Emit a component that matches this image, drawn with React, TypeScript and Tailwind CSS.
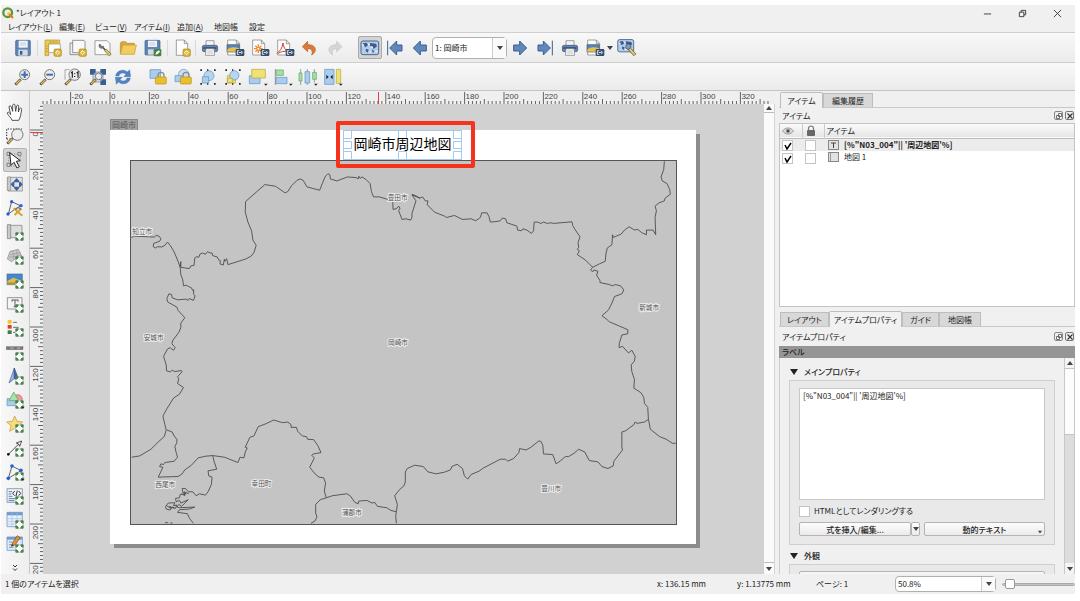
import type { ReactNode } from "react";

/* ---------- shared icon parts, drawn on a 48 unit grid ---------- */

function Icon({ children, size = "h-4 w-4" }: { children: ReactNode; size?: string }) {
  return (
    <svg viewBox="0 0 48 48" className={`${size} shrink-0 overflow-visible`} fill="none" aria-hidden="true">
      {children}
    </svg>
  );
}

const Plus = () => (
  <g>
    <rect x="25" y="25" width="25" height="25" rx="3" fill="#4a8350" />
    <path d="M37.500 25v25M25 37.500h25" stroke="#e4efe4" strokeWidth="6" />
    <path d="M37.500 30v15M30 37.500h15" stroke="#fff" strokeWidth="9" />
  </g>
);
const NewBadge = () => (
  <g>
    <rect x="27" y="27" width="22" height="22" rx="4" fill="#d9b12c" stroke="#a98a1e" strokeWidth="2" />
    <path d="M38 30v16M30 38h16M33 33l10 10M43 33l-10 10" stroke="#fff" strokeWidth="2.500" />
    <circle cx="38" cy="38" r="3" fill="#d9b12c" />
  </g>
);
const ExportBadge = () => (
  <g>
    <rect x="26" y="27" width="26" height="21" rx="4" fill="#2f4a6b" />
    <path d="M37 32h-6v11h6M35 37.500h9M42 32l5 5.500-5 5.500" stroke="#fff" strokeWidth="2.500" />
  </g>
);
const Page = () => <path d="M7 0h24l10 11v35H7zM31 0v11h10" fill="#fdfdfd" stroke="#777" strokeWidth="2" />;
const Lens = ({ cx = 29, cy = 17, r = 15 }: { cx?: number; cy?: number; r?: number }) => (
  <g>
    <path d="M17 31L1 47" stroke="#3a3a3a" strokeWidth="8" />
    <path d="M16 32L3 45" stroke="#eac04a" strokeWidth="4.500" />
    <circle cx={cx} cy={cy} r={r} fill="#ececec" stroke="#777" strokeWidth="3" />
  </g>
);
const Lock = () => (
  <g>
    <path d="M24 26v-7a9 9 0 0118 0v7" stroke="#8a8a8a" strokeWidth="4" />
    <rect x="16" y="24" width="33" height="21" rx="3" fill="#e9bf2e" stroke="#b99216" strokeWidth="2" />
  </g>
);
const Corners = () => (
  <g fill="#222">
    <path d="M1 1h5v5H1zM42 1h5v5h-5zM1 42h5v5H1zM42 42h5v5h-5zM21 1h4v4h-4zM21 43h4v4h-4z" />
  </g>
);
const MenuDot = () => <path d="M42 44h11l-5.500 6z" fill="#222" />;
const Globe = () => (
  <g>
    <rect x="-3" y="3" width="53" height="41" rx="6" fill="#b3cdea" stroke="#4b658c" strokeWidth="3" />
    <path d="M2 10l12-2 4 8-8 6zM24 9l18 2 3 8-10 8-4-8-8-2zM12 26l8 3-3 9-6-5zM30 28l7 6-5 5z" fill="#3d5c8c" />
    <path d="M0 15h6M40 34h6M22 36h5M18 14h6M28 22h5" stroke="#fff" strokeWidth="3" />
  </g>
);

const icons = {
  save: (
    <>
      <rect x="2" y="1" width="44" height="46" rx="3" fill="#5f86b7" stroke="#395a88" strokeWidth="2" />
      <rect x="11" y="2" width="27" height="21" fill="#f1f4f8" />
      <path d="M15 9h18M15 15h18" stroke="#aebccc" strokeWidth="2" />
      <rect x="10" y="29" width="28" height="18" fill="#d4dae1" />
      <rect x="15" y="33" width="7" height="11" fill="#395a88" />
    </>
  ),
  newLayout: (
    <>
      <path d="M10 12h36v26H10z" fill="#fff" stroke="#888" strokeWidth="2" />
      <path d="M0 0h44v10H11v37H0z" fill="#edc94f" stroke="#b4922b" strokeWidth="2" />
      <path d="M17 3v4M25 3v4M33 3v4M3 18h4M3 26h4M3 34h4" stroke="#8c6f16" strokeWidth="2" />
      <NewBadge />
    </>
  ),
  duplicate: (
    <>
      <path d="M0 9h31v35H0z" fill="#eee" stroke="#666" strokeWidth="2" />
      <path d="M8 1h34l3 4v33H8z" fill="#f9f9fb" stroke="#666" strokeWidth="2" />
      <NewBadge />
    </>
  ),
  manager: (
    <>
      <path d="M0 2h36l9 9v33H0z" fill="#fbfbfb" stroke="#777" strokeWidth="2" />
      <path d="M15 12a7 7 0 1011 7l-5 1-4-4z" fill="#7b8794" stroke="#444" strokeWidth="2" />
      <path d="M24 23l7 7" stroke="#555" strokeWidth="5" />
      <path d="M31 29l15 17" stroke="#555" strokeWidth="9" />
      <path d="M32 30l13 15" stroke="#edc94f" strokeWidth="6" />
    </>
  ),
  folder: (
    <>
      <path d="M1 42V9l4-4h12l4 5h22v8" fill="#d8a93a" stroke="#b3862a" strokeWidth="2" />
      <path d="M1 43L8 15h41l-6 28z" fill="#f3cc60" stroke="#c39a32" strokeWidth="2" />
    </>
  ),
  saveTemplate: (
    <>
      <rect x="0" y="1" width="45" height="44" rx="3" fill="#5f86b7" stroke="#395a88" strokeWidth="2" />
      <rect x="9" y="2" width="27" height="19" fill="#f1f4f8" />
      <path d="M13 9h18M13 15h18" stroke="#aebccc" strokeWidth="2" />
      <rect x="9" y="28" width="20" height="16" fill="#d4dae1" />
      <rect x="26" y="27" width="23" height="22" rx="4" fill="#48834d" />
      <path d="M31 44l3-8 8-5 3 4-7 7z" fill="#fff" />
    </>
  ),
  addPage: (
    <>
      <Page />
      <NewBadge />
    </>
  ),
  print: (
    <>
      <path d="M12 2h24v16H12z" fill="#f4f4f4" stroke="#777" strokeWidth="2" />
      <rect x="1" y="16" width="46" height="19" rx="5" fill="#6388b5" stroke="#3a5275" strokeWidth="2" />
      <path d="M4 24h40" stroke="#2d4262" strokeWidth="4" />
      <path d="M12 26h24l2 20H10z" fill="#fafafa" stroke="#777" strokeWidth="2" />
      <path d="M16 33h16M15 39h18" stroke="#aaa" strokeWidth="2" />
    </>
  ),
  exportImage: (
    <>
      <path d="M2 0h26l10 11v34H2zM28 0v11h10" fill="#fdfdfd" stroke="#777" strokeWidth="2" />
      <path d="M0 14h37v22H0z" fill="#4f86c6" stroke="#555" strokeWidth="2" />
      <path d="M1 29c8-8 20-9 35-4v10H1z" fill="#e6c14a" />
      <ExportBadge />
    </>
  ),
  exportSvg: (
    <>
      <path d="M2 0h26l10 11v34H2zM28 0v11h10" fill="#fdfdfd" stroke="#777" strokeWidth="2" />
      <path d="M19 13v26M6 26h26M10 17l18 18M28 17L10 35" stroke="#ef8a2b" strokeWidth="4" />
      <circle cx="19" cy="26" r="3" fill="#fff" />
      <ExportBadge />
    </>
  ),
  exportPdf: (
    <>
      <path d="M2 0h26l10 11v34H2zM28 0v11h10" fill="#fdfdfd" stroke="#777" strokeWidth="2" />
      <path d="M-1 40c9-5 17-15 19-31 1 12 6 21 16 25-13-1-23 1-30 6" stroke="#cf4034" strokeWidth="3" />
      <ExportBadge />
    </>
  ),
  undo: (
    <path
      d="M17 4L1 20l16 15v-9c10-1 17 5 12 19 16-9 17-31-12-31z"
      fill="#d9793a"
      stroke="#b75c22"
      strokeWidth="2"
    />
  ),
  redo: (
    <path
      d="M29 4l16 16-16 15v-9c-10-1-17 5-12 19C1 36 0 14 29 14z"
      fill="#d6d6d6"
      stroke="#c2c2c2"
      strokeWidth="2"
    />
  ),
  globe: <Globe />,
  first: (
    <path d="M2 2v44M45 15v18H29v12L8 24 29 3v12z" fill="#5f88bd" stroke="#3c5f92" strokeWidth="3" />
  ),
  prev: <path d="M43 15v18H25v12L4 24 25 3v12z" fill="#5f88bd" stroke="#3c5f92" strokeWidth="3" />,
  next: <path d="M5 15v18h18v12l21-21L23 3v12z" fill="#5f88bd" stroke="#3c5f92" strokeWidth="3" />,
  last: (
    <path d="M46 2v44M3 15v18h16v12l21-21L19 3v12z" fill="#5f88bd" stroke="#3c5f92" strokeWidth="3" />
  ),
  atlasSettings: (
    <>
      <g transform="translate(-1 -4) scale(.9)">
        <Globe />
      </g>
      <circle cx="28" cy="20" r="8" fill="#7f9cc4" stroke="#444" strokeWidth="2" />
      <path d="M31 26l17 19" stroke="#555" strokeWidth="10" />
      <path d="M32 27l15 17" stroke="#edd05f" strokeWidth="6" />
    </>
  ),
  zoomIn: (
    <>
      <Lens />
      <path d="M29 7v20M19 17h20" stroke="#3f6fae" strokeWidth="6" />
    </>
  ),
  zoomOut: (
    <>
      <Lens />
      <path d="M19 17h20" stroke="#3f6fae" strokeWidth="6" />
    </>
  ),
  zoomActual: (
    <>
      <path d="M0 32V2h14" stroke="#888" strokeWidth="2" />
      <Lens r={17} />
      <path d="M18 12l4-3v17M35 12l4-3v17M29 13v3M29 21v3" stroke="#222" strokeWidth="3.500" />
    </>
  ),
  zoomFull: (
    <>
      <path d="M9 9h30v30H9z" fill="#dcdcdc" stroke="#777" strokeWidth="2" />
      <Lens cx={26} cy={22} r={10} />
      <path d="M0 0h17v17H0zM31 0h17v17H31zM31 31h17v17H31z" fill="#39608f" />
      <path d="M17 9v8H9zM31 9v8h8zM31 39v-8h8z" fill="#8fb0d8" />
    </>
  ),
  refresh: (
    <>
      <path d="M2 21C4 4 26-2 37 9l7-7 3 21H26l7-7C25 9 14 12 12 21z" fill="#4f83c4" stroke="#3768a6" />
      <path d="M46 27C44 44 22 50 11 39l-7 7-3-21h21l-7 7c8 7 19 4 21-5z" fill="#4f83c4" stroke="#3768a6" />
    </>
  ),
  lock: (
    <>
      <path d="M0 2h32v26H0z" fill="#a9cdee" stroke="#5b8fc0" strokeWidth="2" />
      <Lock />
    </>
  ),
  unlock: (
    <>
      <circle cx="26" cy="17" r="16" fill="#c9def2" stroke="#6d95bd" strokeWidth="2" />
      <path d="M0 20h20v18H0z" fill="#a9cdee" stroke="#5b8fc0" strokeWidth="2" />
      <Lock />
    </>
  ),
  group: (
    <>
      <circle cx="27" cy="20" r="15" fill="#b8d5ef" stroke="#5f8fbe" strokeWidth="2" />
      <path d="M7 23h19v19H7z" fill="#a9cdee" stroke="#5b8fc0" strokeWidth="2" />
      <Corners />
    </>
  ),
  ungroup: (
    <>
      <path d="M7 20h24v22H7z" fill="#f1e26b" stroke="#b1a23a" strokeWidth="2" />
      <circle cx="28" cy="19" r="14" fill="#b8d5ef" stroke="#5f8fbe" strokeWidth="2" />
      <path d="M8 28h14v13H8z" fill="#f1e26b" stroke="#b1a23a" strokeWidth="2" />
      <Corners />
    </>
  ),
  raise: (
    <>
      <path d="M-2 20h32v24H-2z" fill="#a9cdee" stroke="#5b8fc0" strokeWidth="2" />
      <path d="M5 1h41v26H5z" fill="#efe274" stroke="#b3a440" strokeWidth="2" />
      <MenuDot />
    </>
  ),
  align: (
    <>
      <path d="M1 0v48" stroke="#666" strokeWidth="2" />
      <path d="M3 3h22v16H3z" fill="#a8e0a6" stroke="#5aa35b" strokeWidth="2" />
      <path d="M3 25h33v19H3z" fill="#a9cdee" stroke="#5b8fc0" strokeWidth="2" />
      <MenuDot />
    </>
  ),
  distribute: (
    <>
      <path d="M2 0v48M22 0v48M43 0v40" stroke="#777" strokeWidth="2" />
      <path d="M-3 12h9v24h-9zM38 10h11v21H38z" fill="#a8e0a6" stroke="#5aa35b" strokeWidth="2" />
      <path d="M15 8h14v34H15z" fill="#a9cdee" stroke="#5b8fc0" strokeWidth="2" />
      <MenuDot />
    </>
  ),
  resize: (
    <>
      <path d="M-1 1h28v45H-1z" fill="#a9cdee" stroke="#5b8fc0" strokeWidth="2" />
      <path d="M34 1h13v42H34z" fill="#efe274" stroke="#b3a440" strokeWidth="2" />
      <path d="M4 17v14l7-7zM23 17v14l-7-7z" fill="#222" />
      <MenuDot />
    </>
  ),
  pan: (
    <path
      d="M15 49c-2-9-14-15-14-23 4-4 8 2 10 6L6 9c0-5 6-5 7 0l4 13 0-18c1-5 7-5 7 0l2 18 3-16c1-4 7-3 6 1l-1 17 4-10c2-4 7-2 6 2-2 12-3 24-9 33z"
      fill="#fff"
      stroke="#333"
      strokeWidth="2.500"
    />
  ),
  zoomTool: (
    <>
      <path d="M-1 32V3h46" stroke="#222" strokeWidth="3" strokeDasharray="4 4" />
      <path d="M-1 33h18" stroke="#222" strokeWidth="3" strokeDasharray="4 4" />
      <Lens cx={31} cy={20} r={17} />
    </>
  ),
  select: (
    <>
      <path d="M5 8v34h30M5 6h34v20" stroke="#777" strokeWidth="2" strokeDasharray="4 4" />
      <path d="M0 1h9v9H0zM33 1h9v9H33zM0 34h9v9H0z" fill="#ddd" stroke="#555" strokeWidth="2" />
      <path d="M8 2l4 38 9-9 9 17 7-4-9-16 12-2z" fill="#fff" stroke="#222" strokeWidth="3" />
    </>
  ),
  moveContent: (
    <>
      <path d="M3 4h43v41H3z" fill="#e2e2e2" stroke="#777" strokeWidth="2" />
      <path d="M1 3h10v40H1z" fill="#c9c9c9" stroke="#888" strokeWidth="2" />
      <path d="M29 6l8 9v4H21v-4zM29 45l8-9v-4H21v4zM11 25l7-8h4v16h-4zM47 25l-7-8h-4v16h4z" fill="#38639e" />
    </>
  ),
  editNodes: (
    <>
      <path d="M14 5L4 42l22-16 16-8z" fill="#f3f3f3" stroke="#444" strokeWidth="2.500" />
      <path d="M20 25l26 22M23 45l20-20" stroke="#d5a32e" strokeWidth="6" />
      <path d="M25 29l9-7 9 7" stroke="#777" strokeWidth="4" />
      <circle cx="14" cy="5" r="5" fill="#2461dd" />
      <circle cx="42" cy="17" r="5" fill="#2461dd" />
      <circle cx="3" cy="42" r="5" fill="#2461dd" />
    </>
  ),
  addMap: (
    <>
      <path d="M4 4h41v37H4z" fill="#dedede" stroke="#777" strokeWidth="2" />
      <path d="M1 2h10v42H1z" fill="#c9c9c9" stroke="#777" strokeWidth="2" />
      <Plus />
    </>
  ),
  add3d: (
    <>
      <path d="M1 33L9 10l25-6 12 24-22 5-10 8z" fill="#c9c9c9" stroke="#888" strokeWidth="2" />
      <path d="M9 20l32-6M6 28l37-6M18 9l2 26M28 7l6 24" stroke="#999" strokeWidth="2" />
      <Plus />
    </>
  ),
  addPicture: (
    <>
      <path d="M0 6h46v32H0z" fill="#4488d2" stroke="#4a6b8f" strokeWidth="2" />
      <path d="M1 27l18-10 26 10v10H1z" fill="#e2bd4c" />
      <path d="M1 31h44v6H1z" fill="#b79430" />
      <Plus />
    </>
  ),
  addLabel: (
    <>
      <path d="M1 5h44v34H1z" fill="#f4f4f4" stroke="#666" strokeWidth="2" />
      <path d="M15 12h18M24 12v20M20 32h8M15 11v6M33 11v6" stroke="#444" strokeWidth="2.500" />
      <Plus />
    </>
  ),
  addLegend: (
    <>
      <rect x="2" y="0" width="12" height="11" fill="#f2c230" />
      <rect x="2" y="15" width="12" height="11" fill="#d8402c" />
      <rect x="2" y="31" width="12" height="11" fill="#3e7e4a" />
      <path d="M18 7h12M18 22h17M18 37h8" stroke="#555" strokeWidth="2.500" />
      <Plus />
    </>
  ),
  addScale: (
    <>
      <rect x="-2" y="8" width="50" height="9" fill="#777" stroke="#555" />
      <path d="M10 12.500h10M30 12.500h10" stroke="#bbb" strokeWidth="3" />
      <Plus />
    </>
  ),
  addNorth: (
    <>
      <path d="M22 0L6 45l16-13z" fill="#9dbbe2" stroke="#3f5f93" strokeWidth="2" />
      <path d="M22 0l15 40-15-8z" fill="#3f68a8" stroke="#34527f" strokeWidth="2" />
      <Plus />
    </>
  ),
  addShape: (
    <>
      <circle cx="32" cy="22" r="14" fill="#ee9d98" stroke="#bf605c" strokeWidth="2" />
      <path d="M0 20h25v21H0z" fill="#a9cdee" stroke="#5b8fc0" strokeWidth="2" />
      <path d="M20 0L6 26h29z" fill="#a8e3ab" stroke="#4fa256" strokeWidth="2" />
      <Plus />
      <MenuDot />
    </>
  ),
  addMarker: (
    <>
      <path d="M23 0l7 16 17 2-13 11 4 17-15-9-15 9 4-17L-1 18l17-2z" fill="#f5dc7c" stroke="#bf9433" strokeWidth="2" />
      <Plus />
    </>
  ),
  addArrow: (
    <>
      <path d="M4 43L36 11" stroke="#333" strokeWidth="2.500" />
      <path d="M28 9l16-6-6 16-3-7z" fill="#fff" stroke="#333" strokeWidth="2.500" />
      <circle cx="4" cy="43" r="4" fill="#111" />
      <Plus />
    </>
  ),
  addNode: (
    <>
      <path d="M15 6L4 43l38-23z" fill="#f3f3f3" stroke="#444" strokeWidth="2.500" />
      <circle cx="15" cy="6" r="5.500" fill="#2461dd" />
      <circle cx="42" cy="19" r="5.500" fill="#2461dd" />
      <circle cx="4" cy="43" r="5.500" fill="#2461dd" />
      <Plus />
      <MenuDot />
    </>
  ),
  addHtml: (
    <>
      <path d="M0 2h46v41H0z" fill="#eef1f5" stroke="#667a94" strokeWidth="2" />
      <path d="M5 11h10M5 18h8M5 25h11M5 32h20M5 38h17" stroke="#5a7fb8" strokeWidth="3" />
      <path d="M23 9l-6 7 6 7M35 9l6 7-6 7M31 8l-4 16" stroke="#333" strokeWidth="3" />
      <Plus />
    </>
  ),
  addFixedTable: (
    <>
      <path d="M0 1h46v43H0z" fill="#e9f1fa" stroke="#5b83b5" strokeWidth="2" />
      <path d="M0 1h46v9H0z" fill="#6f9bd0" />
      <path d="M15 3v40M30 3v40M1 20h44M1 28h44M1 36h44" stroke="#a3c1e4" strokeWidth="2" />
      <Plus />
    </>
  ),
  addTable: (
    <>
      <path d="M0 3h46v40H0z" fill="#dfeaf7" stroke="#5b83b5" strokeWidth="2" />
      <path d="M0 3h46v8H0z" fill="#6f9bd0" />
      <path d="M6 18h10M6 26h8M6 34h14" stroke="#6f9bd0" strokeWidth="3" />
      <path d="M13 31l4-11L31-1l8 6-14 21z" fill="#df9337" stroke="#6e4719" strokeWidth="2" />
      <path d="M13 31l2-6 5 3z" fill="#222" />
      <Plus />
    </>
  ),
};
type IconName = keyof typeof icons;

/* ---------- small controls ---------- */

function ToolButton({ name, label, width = "w-[25px]" }: { name: IconName; label: string; width?: string }) {
  return (
    <button type="button" aria-label={label} className={`flex h-6 ${width} shrink-0 items-center justify-center`}>
      <Icon>{icons[name]}</Icon>
    </button>
  );
}

function Grip({ width }: { width: string }) {
  return (
    <span className={`flex ${width} shrink-0 justify-center`}>
      <span className="h-4 w-1 bg-[radial-gradient(#c4c4c4_35%,transparent_40%)] bg-[size:2px_2px]" />
    </span>
  );
}

function Separator({ width }: { width: string }) {
  return (
    <span className={`flex ${width} shrink-0 justify-center`}>
      <span className="h-4 w-px bg-[#d9d9d9]" />
    </span>
  );
}

const Down = ({ className = "" }: { className?: string }) => (
  <svg viewBox="0 0 6 4" className={`h-1 w-1.5 shrink-0 ${className}`} aria-hidden="true">
    <path d="M0 0h6L3 4z" fill="#444" />
  </svg>
);
const Up = () => (
  <svg viewBox="0 0 6 4" className="h-1 w-1.5 shrink-0" aria-hidden="true">
    <path d="M0 4h6L3 0z" fill="#444" />
  </svg>
);

function Combo({ label, value, className }: { label: string; value: string; className: string }) {
  return (
    <span className={`relative flex shrink-0 ${className}`}>
      <select
        aria-label={label}
        className="w-full appearance-none rounded-sm border border-[#b0b0b0] bg-white pl-[2px] text-[8px] leading-none"
      >
        <option>{value}</option>
      </select>
      <span className="pointer-events-none absolute inset-y-px right-px flex w-[14px] items-center justify-center border-l border-[#ccc] bg-[#fafafa]">
        <Down />
      </span>
    </span>
  );
}

function Check({ label, checked = false }: { label: string; checked?: boolean }) {
  return (
    <span className="relative flex h-[11px] w-[11px] shrink-0">
      <input
        type="checkbox"
        aria-label={label}
        defaultChecked={checked}
        className="peer h-full w-full appearance-none border border-[#c4c4c4] bg-white"
      />
      <svg viewBox="0 0 11 11" className="pointer-events-none absolute inset-0 hidden peer-checked:block" aria-hidden="true">
        <path d="M3 5l2 4 4-6" fill="none" stroke="#000" strokeWidth="1.500" />
      </svg>
    </span>
  );
}

function DockButtons() {
  return (
    <span className="ml-auto flex gap-[2px]">
      <button type="button" aria-label="フロート" className="flex h-[9px] w-[9px] items-center justify-center rounded-xs border border-[#888]">
        <svg viewBox="0 0 6 6" className="h-1.5 w-1.5" fill="none" stroke="#555">
          <path d="M2.500 .5h3v3h-3zM.5 2.500h3v3h-3z" strokeWidth=".8" />
        </svg>
      </button>
      <button type="button" aria-label="閉じる" className="flex h-[9px] w-[9px] items-center justify-center rounded-xs border border-[#777]">
        <svg viewBox="0 0 6 6" className="h-1.5 w-1.5" fill="none" stroke="#333">
          <path d="M.5 .5l5 5M5.500 .5l-5 5" strokeWidth="1.100" />
        </svg>
      </button>
    </span>
  );
}

function Tabs({ items, active }: { items: { name: string; width: string }[]; active: string }) {
  return (
    <div role="tablist" className="flex h-4 shrink-0 items-end border-b border-[#c8c8c8] pl-px">
      {items.map((t) => (
        <button
          key={t.name}
          type="button"
          role="tab"
          aria-selected={t.name === active}
          className={`${t.width} shrink-0 border border-b-0 border-[#bdbdbd] whitespace-nowrap ${
            t.name === active ? "-mb-px h-4 rounded-t-xs bg-[#f1f1f1]" : "h-[14px] bg-[#d8d8d8]"
          }`}
        >
          {t.name}
        </button>
      ))}
    </div>
  );
}

/* ---------- rulers ---------- */

const UNIT = 1.97;
const range = (from: number, to: number, step: number) =>
  Array.from({ length: Math.floor((to - from) / step) + 1 }, (_, i) => from + i * step);

function HorizontalRuler() {
  const origin = 80;
  return (
    <svg className="h-[13px] w-full shrink-0 bg-[#efefef] font-['Liberation_Sans',sans-serif]" aria-hidden="true">
      {range(-34, 334, 2).map((v) => {
        const x = origin + v * UNIT;
        const top = v % 20 === 0 ? 1 : v % 10 === 0 ? 8 : 10;
        return <path key={v} d={`M${x} ${top}V13`} stroke="#555" strokeWidth=".9" />;
      })}
      {range(-20, 320, 20).map((v) => (
        <text key={v} x={origin + v * UNIT + 1} y="8" fontSize="8" fill="#444">
          {v}
        </text>
      ))}
      <path d="M348.500 1V13" stroke="#e04040" />
    </svg>
  );
}

function VerticalRuler() {
  const origin = 26;
  return (
    <svg className="h-full w-[13px] shrink-0 bg-[#efefef] font-['Liberation_Sans',sans-serif]" aria-hidden="true">
      {range(-12, 226, 2).map((v) => {
        const y = origin + v * UNIT;
        const left = v % 20 === 0 ? 0 : v % 10 === 0 ? 8 : 10;
        return <path key={v} d={`M${left} ${y}H13`} stroke="#555" strokeWidth=".9" />;
      })}
      {range(0, 220, 20).map((v) => (
        <text
          key={v}
          x="0"
          y="0"
          transform={`translate(8 ${origin + v * UNIT + 2}) rotate(-90)`}
          textAnchor="end"
          fontSize="8"
          fill="#444"
        >
          {v}
        </text>
      ))}
      <path d="M0 28.500H13" stroke="#e04040" />
    </svg>
  );
}

/* ---------- map ---------- */

const places = [
  { name: "豊田市", x: 833, y: 140 },
  { name: "知立市", x: 64, y: 244 },
  { name: "安城市", x: 98, y: 563 },
  { name: "岡崎市", x: 834, y: 578 },
  { name: "新城市", x: 1590, y: 471 },
  { name: "西尾市", x: 133, y: 1005 },
  { name: "幸田町", x: 423, y: 1002 },
  { name: "蒲郡市", x: 695, y: 1090 },
  { name: "豊川市", x: 1295, y: 1018 },
];

const borderTiles = [
  {
    offset: "translate(0 0)",
    lines: [
      "M32 262L36 256 100 259 106 254 114 256 120 264 116 272 98 278 97 288 104 292 110 288 122 289 132 284 140 274 148 284 160 304 170 328 178 350 180 333 180 350 192 352 206 354 210 346 220 344 222 322 226 318 234 320 238 310 246 307 254 311 260 303 268 307 274 307 276 315 290 319 294 328 299 330 298 340 308 343 311 326 313 332 318 324 322 342 376 325 392 316 400 306 407 284 397 268 393 240 382 214 374 184 375 152 433 101 465 106 494 126 502 122 514 104 530 88 540 84 548 88 560 108 598 118 606 98 614 78 623 68 629 72 630 84 650 90 682 78 708 80 714 84 716 76 720 82 726 78 738 86 750 98 754 122 760 138 778 138 804 146 818 148 819 176 830 173 836 166 840 172 836 180 846 206 858 204 872 208 876 200 876 188 888 150 876 132 900 142",
      "M178 350L180 372 186 388 188 406 196 404 204 408 212 412 216 420 219 418 218 430 223 436 218 450 206 444 202 450 196 446 170 448 154 442 152 432 144 430 138 444 140 454 168 470 172 480 192 502 180 518 180 532 174 546 156 570",
    ],
  },
  {
    offset: "translate(0 570)",
    lines: [
      "M156 0L153 10 163 22 158 30 148 22 140 26 128 48 136 74 137 92 148 95 154 90 162 94 182 91 184 94 170 110 174 116 170 130 188 142 176 162 158 174 138 206 126 228 136 270 130 290 112 306 90 328 56 348 32 352",
      "M138 270L154 276 160 288 168 298 168 308 162 320 166 338 170 352 160 364 132 368 128 374 120 372 116 380 126 382 112 412 172 410 184 402 192 390 212 376 232 354 254 349 276 347 312 352 352 368 358 352 370 354 374 336 380 324 374 322 388 292 400 288 413 260 434 252 460 240 486 248 502 246 512 254 512 262 528 262 532 274 546 288 558 290 562 298 580 299 592 316 602 338 580 342 574 346 582 354 568 382 584 402 596 412 610 414 616 430 612 454 618 474 636 468 680 462 690 468 704 488 714 492 716 484 740 482 756 490 764 488 772 500 800 504 812 512 828 516",
      "M618 474L600 480 586 494 586 520 590 532 584 544 572 551",
      "M829 551L827 530 832 494 824 468 838 450",
      "M276 347L280 364 288 388 262 393 264 408 274 412 272 434 262 456 254 466 236 462 226 468 216 456 202 456 194 446 184 446 186 458 196 462 178 464 176 474 164 476 166 486 176 482 180 490 202 480 182 500 174 494 168 502 176 504 222 502 206 508 176 510 170 518 200 522 206 536 218 551",
      "M134 500L142 490 162 489 158 498 168 496 164 506 154 502 148 511 136 508zM136 497L150 506 146 500 160 506M182 462L192 468 190 456 204 462M132 549L142 549M148 550L155 550",
    ],
  },
  {
    offset: "translate(840 0)",
    lines: [
      "M36 130L50 136 60 142 68 138 76 150 84 150 82 162 104 184 134 196 140 200 164 194 188 206 214 204 228 210 242 200 246 186 262 186 268 198 272 214 292 212 302 210 308 202 318 204 322 216 352 226 354 238 366 240 370 234 382 238 396 248 402 240 404 214 414 214 424 218 432 214 444 218 454 216 462 218 518 213 520 224 528 238 542 258 536 276 538 290 534 296 540 300 534 312 558 328 580 350 574 358 580 364 584 358 596 362 592 374 602 390 602 396 630 402 640 406 648 402 664 406 674 418 668 430 646 438 638 458 628 478 608 496 622 506 630 514 686 538 686 550 668 554 660 580 660 592",
      "M796 31L794 56 786 78 790 90 804 98 812 116 814 130 798 142 796 150 780 156 768 166 772 180 768 200 770 252 762 238 742 238 742 252 728 246 716 236 706 238 690 228 676 238 666 250 642 260 640 252 638 282 624 292 620 310 618 332 600 340 580 350",
    ],
  },
  {
    offset: "translate(840 570)",
    lines: [
      "M660 22L670 18 688 38 698 30 708 48 706 62 696 74 698 94 706 118 704 144 726 158 734 172 736 190 746 202 748 238 754 268 782 290 802 298 820 310 830 310",
      "M748 238L736 246 714 250 708 246 704 254 680 272 668 276 668 322 670 330 644 364 642 378 626 386 608 380 596 366 570 362 556 336 538 328 524 340 508 350 498 350 484 362 470 372 460 344 432 342 430 316 424 304 418 303 394 322 380 330 360 326 358 338 342 356 324 364 318 358 302 358 252 384 238 394 214 404 204 418 194 408 188 386 172 373 156 380 152 390 134 397 108 402 84 396 70 380 44 376 22 386 16 396 16 426 12 438 -2 450",
    ],
  },
];

function RegionMap() {
  return (
    <svg viewBox="30 30 1641 1092" className="absolute left-5 top-[30px] w-[547px] border border-[#555] bg-[#c4c4c4]">
      {borderTiles.map((tile) => (
        <g key={tile.offset} transform={tile.offset} fill="none" stroke="#4c4c4c" strokeWidth="2.700" strokeLinejoin="round">
          {tile.lines.map((d) => (
            <path key={d} d={d} />
          ))}
        </g>
      ))}
      {places.map((p) => (
        <text
          key={p.name}
          x={p.x}
          y={p.y + 7}
          textAnchor="middle"
          fontSize="20"
          fill="#555"
          stroke="#ececec"
          strokeWidth="6"
          paintOrder="stroke"
          strokeLinejoin="round"
        >
          {p.name}
        </text>
      ))}
    </svg>
  );
}

function Canvas() {
  return (
    <div className="relative min-w-0 flex-1 overflow-hidden bg-[#d1d1d1]">
      <span className="absolute left-[67px] top-[15px] h-3 w-7 border border-[#888] bg-[#a3a3a3] text-center text-[8px] leading-[10px] text-[#555]">
        岡崎市
      </span>
      <div className="absolute left-[67px] top-[26px] h-[414px] w-[586px] bg-white shadow-[4px_4px_0_#8c8c8c]">
        <RegionMap />
        <div className="absolute left-[233px] top-0 flex h-[30px] w-[119px] justify-center pt-[5px]">
          <svg viewBox="0 0 119 30" className="absolute inset-0 h-full w-full" fill="none" stroke="#a5c9ee">
            <path d="M.5 .5h118v29h-118zM.5 .5h8v8h-8zM55.500 .5h8v8h-8zM110.500 .5h8v8h-8zM.5 11.500h8v7h-8zM110.500 11.500h8v7h-8zM.5 21.500h8v8h-8zM55.500 21.500h8v8h-8zM110.500 21.500h8v8h-8z" />
          </svg>
          <span className="relative text-[14px] leading-4 text-black">岡崎市周辺地図</span>
        </div>
        <div className="absolute -top-[9px] left-[226px] h-[47px] w-[139px] rounded-xs border-4 border-[#f5331c]" />
      </div>
    </div>
  );
}

/* ---------- data ---------- */

const menus = [
  { name: "レイアウト", key: "L", width: "w-[51px]" },
  { name: "編集", key: "E", width: "w-9" },
  { name: "ビュー", key: "V", width: "w-[39px]" },
  { name: "アイテム", key: "I", width: "w-[43px]" },
  { name: "追加", key: "A", width: "w-[37px]" },
  { name: "地図帳", key: "", width: "w-[35px]" },
  { name: "設定", key: "", width: "w-8" },
];

type Tool = [IconName, string];
const layoutTools: Tool[] = [
  ["newLayout", "新規レイアウト"],
  ["duplicate", "レイアウトを複製"],
  ["manager", "レイアウトマネージャ"],
  ["folder", "テンプレートから追加"],
  ["saveTemplate", "テンプレートとして保存"],
];
const exportTools: Tool[] = [
  ["print", "印刷"],
  ["exportImage", "画像としてエクスポート"],
  ["exportSvg", "SVGとしてエクスポート"],
  ["exportPdf", "PDFとしてエクスポート"],
  ["undo", "元に戻す"],
  ["redo", "やり直し"],
];
const zoomTools: Tool[] = [
  ["zoomIn", "拡大"],
  ["zoomOut", "縮小"],
  ["zoomActual", "100%"],
  ["zoomFull", "全域表示"],
  ["refresh", "更新"],
];
const actionTools: Tool[] = [
  ["lock", "ロック"],
  ["unlock", "ロック解除"],
  ["group", "グループ化"],
  ["ungroup", "グループ解除"],
  ["raise", "前面へ"],
  ["align", "整列"],
  ["distribute", "分布"],
  ["resize", "リサイズ"],
];
const sideTools: Tool[] = [
  ["pan", "パン"],
  ["zoomTool", "ズーム"],
  ["select", "選択"],
  ["moveContent", "コンテンツを移動"],
  ["editNodes", "ノードを編集"],
  ["addMap", "地図を追加"],
  ["add3d", "3D地図を追加"],
  ["addPicture", "画像を追加"],
  ["addLabel", "ラベルを追加"],
  ["addLegend", "凡例を追加"],
  ["addScale", "スケールバーを追加"],
  ["addNorth", "方位記号を追加"],
  ["addShape", "図形を追加"],
  ["addMarker", "マーカーを追加"],
  ["addArrow", "矢印を追加"],
  ["addNode", "ノードアイテムを追加"],
  ["addHtml", "HTMLを追加"],
  ["addFixedTable", "固定テーブルを追加"],
  ["addTable", "属性テーブルを追加"],
];

const layerRows = [
  { name: "[%\"N03_004\"|| '周辺地図'%]", label: true },
  { name: "地図 1", label: false },
];

/* ---------- regions ---------- */

function TitleBar() {
  return (
    <header className="flex h-4 shrink-0 items-center pl-px">
      <svg viewBox="0 0 36 36" className="h-3 w-3" fill="none" aria-hidden="true">
        <circle cx="17" cy="17" r="13" stroke="#5a9a32" strokeWidth="7" />
        <path d="M18 18l15 15" stroke="#ee7913" strokeWidth="7" />
        <path d="M17 17h9l-9 9z" fill="#f0d33c" />
      </svg>
      <h1 className="ml-[2px] text-[8px] leading-3">*レイアウト 1</h1>
      <div className="ml-auto flex items-center">
        {[
          { label: "最小化", d: "M1 5.500h8" },
          { label: "元に戻す", d: "M1.500 3.500h5v5h-5zM3.500 3.500v-2h5v5h-2" },
          { label: "閉じる", d: "M1 1l8 8M9 1L1 9" },
        ].map((b) => (
          <button key={b.label} type="button" aria-label={b.label} className="flex w-[35px] justify-center">
            <svg viewBox="0 0 10 10" className="h-[9px] w-[9px]" fill="none" stroke="#333">
              <path d={b.d} />
            </svg>
          </button>
        ))}
      </div>
    </header>
  );
}

function ItemsDock() {
  return (
    <section className="flex h-[215px] shrink-0 flex-col">
      <Tabs
        active="アイテム"
        items={[
          { name: "アイテム", width: "w-[43px]" },
          { name: "編集履歴", width: "w-[50px]" },
        ]}
      />
      <div className="flex h-[15px] shrink-0 items-center pl-[3px] pr-px">
        <h2>アイテム</h2>
        <DockButtons />
      </div>
      <div className="min-h-0 flex-1 border border-[#c4c4c4] bg-white">
        <table className="w-full table-fixed border-collapse text-left">
          <colgroup>
            <col className="w-[22px]" />
            <col className="w-[22px]" />
            <col />
          </colgroup>
          <thead>
            <tr className="h-[14px] border-b border-[#bbb] bg-linear-to-b from-[#fafafa] to-[#e6e6e6]">
              <th className="border-r border-[#ccc] p-0" aria-label="表示">
                <svg viewBox="0 0 12 8" className="ml-[2px] h-2 w-3" fill="none" stroke="#999">
                  <path d="M.5 4c3-4 8-4 11 0-3 4-8 4-11 0z" fill="#ddd" />
                  <circle cx="6" cy="4" r="1.800" fill="#444" />
                </svg>
              </th>
              <th className="border-r border-[#ccc] p-0" aria-label="ロック">
                <svg viewBox="0 0 10 11" className="ml-[3px] h-[11px] w-[10px]" fill="none">
                  <path d="M2.500 6V3.500a2.500 2.500 0 015 0V6" stroke="#777" strokeWidth="1.200" />
                  <rect x="1" y="5" width="8" height="6" rx="1" fill="#666" />
                </svg>
              </th>
              <th className="p-0 pl-[2px] font-normal">アイテム</th>
            </tr>
          </thead>
          <tbody>
            {layerRows.map((r) => (
              <tr key={r.name} className={`h-[13px] ${r.label ? "bg-[#ececec]" : ""}`}>
                <td className="p-0 pl-[2px] align-bottom">
                  <Check label={`${r.name} 表示`} checked />
                </td>
                <td className="p-0 pl-[3px] align-bottom">
                  <Check label={`${r.name} ロック`} />
                </td>
                <td className="p-0 pl-1 align-top">
                  <span className="flex items-end gap-[5px]">
                    <svg viewBox="0 0 11 10" className="h-[10px] w-[11px]" fill="none">
                      <rect x=".5" y=".5" width="10" height="9" fill="#e2e2e2" stroke="#888" />
                      {r.label ? <path d="M3 3h5M5.500 3v5" stroke="#444" /> : <path d="M2.500 1v8" stroke="#999" />}
                    </svg>
                    <span className={`leading-[11px] ${r.label ? "font-bold" : ""}`}>{r.name}</span>
                  </span>
                </td>
              </tr>
            ))}
          </tbody>
        </table>
      </div>
    </section>
  );
}

function GroupTitle({ children }: { children: ReactNode }) {
  return (
    <h3 className="flex h-[14px] items-center gap-[6px] pl-[1px] font-medium">
      <svg viewBox="0 0 8 6" className="h-1.5 w-2" aria-hidden="true">
        <path d="M0 0h8L4 6z" fill="#222" />
      </svg>
      {children}
    </h3>
  );
}

const buttonLook = "h-[14px] rounded-xs border border-[#b4b4b4] bg-linear-to-b from-[#fdfdfd] to-[#ebebeb] leading-[11px] font-medium";

function PropertiesDock() {
  return (
    <section className="flex min-h-0 flex-1 flex-col">
      <Tabs
        active="アイテムプロパティ"
        items={[
          { name: "レイアウト", width: "w-[49px]" },
          { name: "アイテムプロパティ", width: "w-[73px]" },
          { name: "ガイド", width: "w-[37px]" },
          { name: "地図帳", width: "w-[42px]" },
        ]}
      />
      <div className="flex h-[19px] shrink-0 items-center pl-[3px] pr-px">
        <h2>アイテムプロパティ</h2>
        <DockButtons />
      </div>
      <div className="flex h-3 shrink-0 items-center bg-[#959595] pl-[3px] font-medium">ラベル</div>
      <div className="flex min-h-0 flex-1">
        <div className="min-w-0 flex-1 overflow-hidden border-l border-[#ccc] pl-[9px] pr-[9px] pt-[7px]">
          <GroupTitle>メインプロパティ</GroupTitle>
          <div className="mt-px flex h-[165px] flex-col border border-[#cfcfcf] bg-[#e9e9e9] px-[9px] pt-[7px]">
            <textarea
              aria-label="ラベル"
              defaultValue={"[%\"N03_004\"|| '周辺地図'%]"}
              className="h-28 w-full shrink-0 resize-none border border-[#c8c8c8] bg-white px-[3px] py-px text-[8px] leading-3"
            />
            <label className="mt-[5px] flex shrink-0 items-center gap-1">
              <Check label="HTMLとしてレンダリングする" />
              HTMLとしてレンダリングする
            </label>
            <div className="mt-[5px] grid shrink-0 grid-cols-2 gap-1">
              <div className="flex">
                <button type="button" className={`${buttonLook} min-w-0 flex-1`}>
                  式を挿入/編集...
                </button>
                <button type="button" aria-label="式メニュー" className={`${buttonLook} flex w-[9px] items-center justify-center`}>
                  <Down />
                </button>
              </div>
              <button type="button" className={`${buttonLook} relative`}>
                動的テキスト
                <Down className="absolute bottom-px right-px scale-75" />
              </button>
            </div>
          </div>
          <div className="mt-1">
            <GroupTitle>外観</GroupTitle>
          </div>
          <div className="mt-px border border-[#cfcfcf] bg-[#e9e9e9] px-[9px] pt-[6px]">
            <div className="h-4 rounded-xs border border-[#b4b4b4] bg-[#f6f6f6]" />
          </div>
        </div>
        <div className="flex w-[11px] shrink-0 flex-col border-x border-[#c8c8c8] bg-[#dcdcdc]">
          <span className="flex h-[10px] items-center justify-center bg-[#f4f4f4]">
            <Up />
          </span>
          <span className="h-[67px] border-y border-[#c4c4c4] bg-[#fcfcfc]" />
          <span className="mt-auto flex h-[11px] items-center justify-center bg-[#f4f4f4]">
            <Down />
          </span>
        </div>
      </div>
    </section>
  );
}

export default function App() {
  return (
    <div className="h-screen bg-white pb-[7px] pl-px pr-[5px] pt-[5px]">
      <div
        lang="ja"
        className="flex h-full flex-col overflow-hidden bg-[#f0f0f0] font-['Noto_Sans_CJK_JP',sans-serif] text-[8px] leading-[12px] text-[#222] [font-feature-settings:'palt']"
      >
        <TitleBar />
        <nav className="flex h-[11px] shrink-0 items-center pl-[7px]">
          {menus.map((m) => (
            <button key={m.name} type="button" className={`${m.width} shrink-0 text-left whitespace-nowrap`}>
              {m.name}
              {m.key && (
                <>
                  (<u>{m.key}</u>)
                </>
              )}
            </button>
          ))}
        </nav>

        <div className="flex h-[31px] shrink-0 items-center border-y border-[#cfcfcf] bg-linear-to-b from-[#f8f8f8] to-[#ebebeb]">
          <Grip width="w-[9px]" />
          <ToolButton name="save" label="保存" />
          <Separator width="w-[5px]" />
          {layoutTools.map(([n, l]) => (
            <ToolButton key={n} name={n} label={l} />
          ))}
          <Separator width="w-1" />
          <ToolButton name="addPage" label="ページを追加" />
          <Separator width="w-[3px]" />
          {exportTools.map(([n, l]) => (
            <ToolButton key={n} name={n} label={l} />
          ))}
          <Grip width="w-[11px]" />
          <button
            type="button"
            aria-label="地図帳のプレビュー"
            aria-pressed="true"
            className="flex h-[23px] w-6 shrink-0 items-center justify-center rounded-xs border border-[#aaa] bg-[#d4d4d4]"
          >
            <Icon>{icons.globe}</Icon>
          </button>
          <ToolButton name="first" label="最初の地物" />
          <ToolButton name="prev" label="前の地物" />
          <Combo label="地図帳の地物" value="1: 岡崎市" className="h-[22px] w-[75px]" />
          <ToolButton name="next" label="次の地物" />
          <ToolButton name="last" label="最後の地物" />
          <ToolButton name="print" label="地図帳を印刷" />
          <ToolButton name="exportImage" label="地図帳を画像としてエクスポート" />
          <button type="button" aria-label="エクスポートメニュー" className="flex h-6 w-[7px] shrink-0 items-center">
            <Down />
          </button>
          <ToolButton name="atlasSettings" label="地図帳の設定" />
        </div>

        <div className="flex h-7 shrink-0 items-center border-b border-[#c4c4c4] bg-linear-to-b from-[#f8f8f8] to-[#ebebeb]">
          <Grip width="w-[9px]" />
          {zoomTools.map(([n, l]) => (
            <ToolButton key={n} name={n} label={l} />
          ))}
          <Grip width="w-[10px]" />
          {actionTools.map(([n, l]) => (
            <ToolButton key={n} name={n} label={l} />
          ))}
        </div>

        <main className="flex min-h-0 flex-1">
          <aside className="flex w-[29px] shrink-0 flex-col items-center overflow-hidden border-r border-[#c8c8c8] bg-linear-to-r from-[#f8f8f8] to-[#eeeeee]">
            <span className="flex h-[9px] shrink-0 items-center">
              <span className="h-1 w-4 bg-[radial-gradient(#c4c4c4_35%,transparent_40%)] bg-[size:2px_2px]" />
            </span>
            {sideTools.map(([n, l]) => (
              <button
                key={n}
                type="button"
                aria-label={l}
                className={`flex h-6 w-6 shrink-0 items-center justify-center ${
                  n === "select" ? "rounded-xs border border-[#b4b4b4] bg-[#d4d4d4]" : ""
                }`}
              >
                <Icon>{icons[n]}</Icon>
              </button>
            ))}
            <button type="button" aria-label="その他" className="mt-2 shrink-0">
              <svg viewBox="0 0 6 8" className="h-2 w-1.5" fill="none" stroke="#333">
                <path d="M1 1l2 2 2-2M1 4.500l2 2 2-2" />
              </svg>
            </button>
          </aside>

          <section className="flex min-w-0 flex-1 flex-col">
            <HorizontalRuler />
            <div className="flex min-h-0 flex-1">
              <VerticalRuler />
              <Canvas />
              <div className="flex w-[11px] shrink-0 flex-col border-r border-[#d4d4d4] bg-[#fafafa]">
                <span className="flex h-[9px] items-center justify-center border-b border-[#bbb]">
                  <Up />
                </span>
                <span className="mt-auto flex h-3 items-center justify-center border-t border-[#bbb]">
                  <Down />
                </span>
              </div>
            </div>
          </section>

          <div className="flex w-[300px] shrink-0 flex-col pl-1 pt-px">
            <ItemsDock />
            <div className="flex h-1 shrink-0 items-center justify-center">
              <span className="h-1 w-3 bg-[radial-gradient(#b8b8b8_35%,transparent_40%)] bg-[size:2px_2px]" />
            </div>
            <PropertiesDock />
          </div>
        </main>

        <footer className="flex h-5 shrink-0 items-center pl-1">
          <span>1 個のアイテムを選択</span>
          <div className="ml-auto flex items-center">
            <span className="w-20">x: 136.15 mm</span>
            <span className="w-[79px]">y: 1.13775 mm</span>
            <span className="w-[79px]">ページ: 1</span>
            <Combo label="ズーム" value="50.8%" className="h-4 w-[101px]" />
            <input
              type="range"
              aria-label="ズームレベル"
              min="0"
              max="100"
              defaultValue="4"
              className="ml-[6px] h-[3px] w-[73px] appearance-none rounded-sm border border-[#aaa] bg-[#c4c4c4] [&::-webkit-slider-thumb]:h-[10px] [&::-webkit-slider-thumb]:w-[10px] [&::-webkit-slider-thumb]:appearance-none [&::-webkit-slider-thumb]:rounded-xs [&::-webkit-slider-thumb]:border [&::-webkit-slider-thumb]:border-[#999] [&::-webkit-slider-thumb]:bg-white"
            />
          </div>
        </footer>
      </div>
    </div>
  );
}
